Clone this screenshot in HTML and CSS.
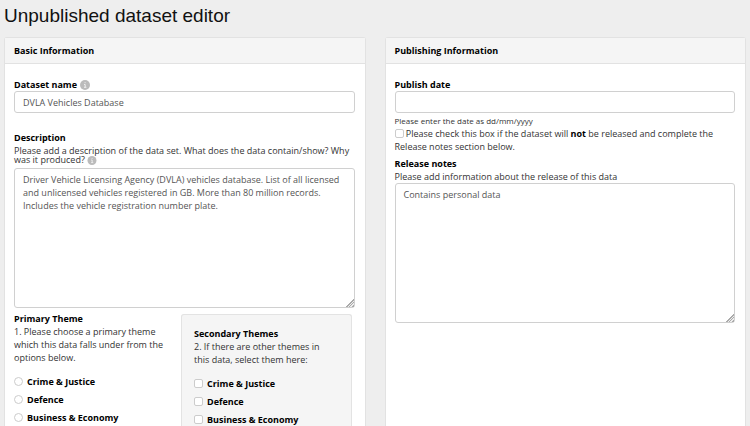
FILE: index.html
```html
<!DOCTYPE html>
<html lang="en">
<head>
<meta charset="utf-8">
<meta name="viewport" content="width=device-width, initial-scale=1">
<title>Unpublished dataset editor</title>
<link rel="stylesheet" href="styles.css">
</head>
<body>
<h1 class="page-title">Unpublished dataset editor</h1>
<form class="columns">
  <section class="panel">
    <h2 class="panel-heading">Basic Information</h2>
    <div class="panel-body">
      <div class="field field-name">
        <div class="label-row">
          <label for="name">Dataset name</label>
          <svg class="info" viewBox="0 0 10 10" aria-hidden="true"><circle cx="5" cy="5" r="5"/><path d="M4 4.5h1.2v2.8M4 7.3h2.4M4.6 2.7h1"/></svg>
        </div>
        <input class="control" id="name" type="text" value="DVLA Vehicles Database">
      </div>
      <div class="field field-description">
        <label for="description">Description</label>
        <p class="help">Please add a description of the data set. What does the data contain/show? Why was it produced? <svg class="info" viewBox="0 0 10 10" aria-hidden="true"><circle cx="5" cy="5" r="5"/><path d="M4 4.5h1.2v2.8M4 7.3h2.4M4.6 2.7h1"/></svg></p>
        <textarea class="control" id="description">Driver Vehicle Licensing Agency (DVLA) vehicles database. List of all licensed and unlicensed vehicles registered in GB. More than 80 million records. Includes the vehicle registration number plate.</textarea>
      </div>
      <div class="themes">
        <fieldset class="theme">
          <legend>Primary Theme</legend>
          <p>1. Please choose a primary theme which this data falls under from the options below.</p>
          <div class="options">
            <label class="option"><input type="radio" name="primary">Crime &amp; Justice</label>
            <label class="option"><input type="radio" name="primary">Defence</label>
            <label class="option"><input type="radio" name="primary">Business &amp; Economy</label>
          </div>
        </fieldset>
        <fieldset class="theme well">
          <legend>Secondary Themes</legend>
          <p>2. If there are other themes in this data, select them here:</p>
          <div class="options">
            <label class="option"><input type="checkbox">Crime &amp; Justice</label>
            <label class="option"><input type="checkbox">Defence</label>
            <label class="option"><input type="checkbox">Business &amp; Economy</label>
          </div>
        </fieldset>
      </div>
    </div>
  </section>
  <section class="panel">
    <h2 class="panel-heading">Publishing Information</h2>
    <div class="panel-body">
      <div class="field field-date">
        <label for="date">Publish date</label>
        <input class="control" id="date" type="text">
        <p class="hint">Please enter the date as dd/mm/yyyy</p>
        <label class="unreleased"><input type="checkbox"> Please check this box if the dataset will <strong>not</strong> be released and complete the Release notes section below.</label>
      </div>
      <div class="field">
        <label for="notes">Release notes</label>
        <p>Please add information about the release of this data</p>
        <textarea class="control" id="notes">Contains personal data</textarea>
      </div>
    </div>
  </section>
</form>
</body>
</html>
```
FILE: styles.css
```css
* {
  box-sizing: border-box;
}

body {
  display: flex;
  flex-direction: column;
  min-height: 100vh;
  margin: 0;
  padding: 0 4px;
  background: #eee;
  color: #333;
  font: 9px/13px "Open Sans", "Noto Sans", sans-serif;
}

p {
  margin: 0;
}

.page-title {
  margin: 0;
  padding: 4px 0 9px;
  color: #111;
  font: 400 19px/24px "Liberation Sans", Arial, sans-serif;
}

.columns {
  display: grid;
  flex: 1;
  grid-template-columns: 1fr 1fr;
  gap: 19px;
}

.panel {
  border: 1px solid #e2e2e2;
  border-bottom: 0;
  border-radius: 3px 3px 0 0;
  background: #fff;
}

.panel-heading {
  margin: 0;
  padding: 6px 9px;
  border-bottom: 1px solid #e2e2e2;
  background: #f5f5f5;
  color: #000;
  font-size: 9px;
  font-weight: 700;
  line-height: 13px;
}

.panel-body {
  padding: 14px 10px 0 9px;
}

.field {
  display: flex;
  flex-direction: column;
}

.field-name {
  margin-bottom: 18px;
}

.field-description {
  margin-bottom: 4px;
}

.field-date {
  margin-bottom: 4px;
}

.label-row {
  display: flex;
  align-items: center;
  gap: 3px;
}

label,
legend,
strong {
  color: #000;
  font-weight: 700;
}

.info {
  width: 10px;
  height: 10px;
  fill: #bbb;
}

.info path {
  fill: none;
  stroke: #eee;
}

.help {
  margin: 2px 0 3px;
  line-height: 9px;
}

.help .info {
  height: 9px;
  vertical-align: middle;
}

.control {
  display: block;
  width: 100%;
  height: 22px;
  margin: 0;
  padding: 4px 8px;
  border: 1px solid #d0d0d0;
  border-radius: 3px;
  background: #fff;
  color: #555;
  font: inherit;
}

textarea.control {
  height: 140px;
  resize: vertical;
}

textarea::-webkit-resizer {
  background: linear-gradient(135deg, transparent 50%, #aaa 50% 58%, #eee 58% 66%, #aaa 66% 75%, #eee 75% 83%, #aaa 83%) right bottom / 8px 8px no-repeat;
}

.themes {
  display: grid;
  grid-template-columns: 154px 1fr;
  gap: 13px;
  padding-right: 3px;
}

.theme {
  min-width: 0;
  margin: 0;
  padding: 0;
  border: 0;
}

legend {
  float: left;
  width: 100%;
  padding: 0;
}

.theme p {
  clear: both;
}

.well {
  margin-top: 2px;
  padding: 12px 20px 0 12px;
  border: 1px solid #e3e3e3;
  border-bottom: 0;
  border-radius: 3px 3px 0 0;
  background: #f5f5f5;
}

.options {
  padding-top: 8px;
}

.option {
  display: flex;
  align-items: center;
  gap: 4px;
  height: 18px;
}

input[type="radio"],
input[type="checkbox"] {
  width: 9px;
  height: 9px;
  margin: 0;
  appearance: none;
  border: 1px solid #ccc;
  border-radius: 2px;
  background: #fff;
}

input[type="radio"] {
  border-radius: 50%;
}

.hint {
  margin-top: 1px;
  font-size: 8px;
}

.unreleased {
  color: #333;
  font-weight: 400;
}

.unreleased input {
  vertical-align: -1px;
}
```
